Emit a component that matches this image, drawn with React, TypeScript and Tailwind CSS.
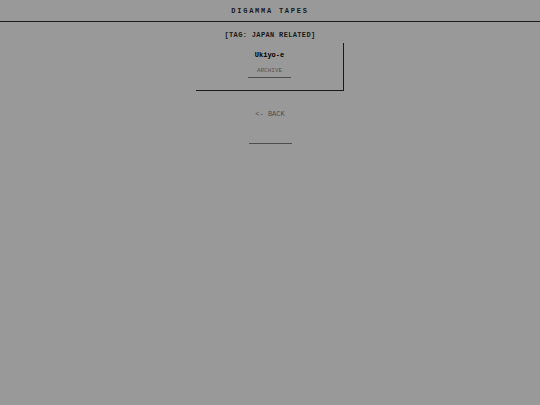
const tapes = [{ name: "Ukiyo-e", href: "#archive" }];

export default function App() {
  return (
    <div className="min-h-screen bg-[#999999] text-center font-['Liberation_Mono',monospace] text-[7px] leading-[10px] text-[#1a1a1a]">
      <header className="border-b border-[#1a1a1a] pt-[6px] pb-[5px]">
        <h1 className="font-bold tracking-[0.25em]">DIGAMMA TAPES</h1>
      </header>
      <main className="flex flex-col items-center pt-[8px]">
        <h2 className="font-bold tracking-wider">[TAG: JAPAN RELATED]</h2>
        <ul className="mt-[3px] w-[148px]">
          {tapes.map((tape) => (
            <li key={tape.name} className="flex flex-col items-center border-r border-b border-[#1a1a1a] pt-[7px] pb-[12px]">
              <h3 className="font-bold text-black">{tape.name}</h3>
              <a href={tape.href} className="mt-[6px] border-b border-[#4d4d4d] px-[9px] pb-[1px] text-[6px] text-[#555555]">
                ARCHIVE
              </a>
            </li>
          ))}
        </ul>
        <a href="#back" className="mt-[18px] text-[#4d4d4d]">
          &lt;- BACK
        </a>
        <hr className="mt-[24px] w-[43px] border-[#4d4d4d]" />
      </main>
    </div>
  );
}
